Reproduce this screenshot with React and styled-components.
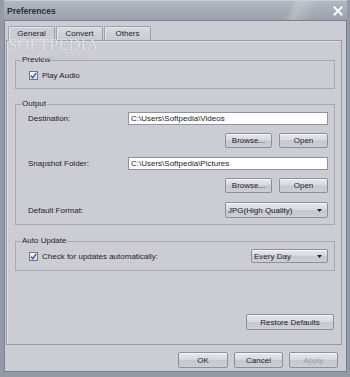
import styled, { createGlobalStyle } from "styled-components";

const GlobalStyle = createGlobalStyle`
  html, body {
    margin: 0;
    padding: 0;
    background: #cbccd4;
  }
  body {
    font-family: "Liberation Sans", Arial, sans-serif;
    font-size: 8px;
    color: #1e2228;
  }
  * { box-sizing: border-box; }
`;

const Window = styled.div`
  position: relative;
  width: 350px;
  height: 377px;
  display: flex;
  flex-direction: column;
  background: #cbccd4;
  border-left: 4px solid #959ba6;
  border-right: 3px solid #959ba6;
  border-bottom: 5px solid #959ba6;
  box-shadow: inset 1px 0 #7a808b, inset -1px 0 #7a808b, inset 0 -1px #7a808b;
  overflow: hidden;
`;

const TitleBar = styled.div`
  height: 21px;
  flex: none;
  display: flex;
  align-items: center;
  justify-content: space-between;
  padding: 0 4px 0 3px;
  border-top: 1px solid #c9cdd4;
  border-bottom: 1px solid #7d838e;
  background:
    linear-gradient(115deg, transparent 82%, rgba(255, 255, 255, 0.22) 84%, transparent 90%),
    linear-gradient(#b2b7c0, #9ba2ad);
  font-weight: bold;
  font-size: 8.5px;
  color: #2b3039;
`;

const CloseIcon = () => (
  <svg width="10" height="10" viewBox="0 0 10 10">
    <path d="M1.5 1.5 L8.5 8.5 M8.5 1.5 L1.5 8.5" stroke="#fff" strokeWidth="2" strokeLinecap="square" />
  </svg>
);

const Body = styled.div`
  flex: 1;
  display: flex;
  flex-direction: column;
  padding: 5px 5px 0 2px;
  min-height: 0;
`;

const TabStrip = styled.div`
  display: flex;
  align-items: flex-end;
  gap: 1px;
  margin-left: 2px;
  height: 14px;
  flex: none;
`;

const Tab = styled.div`
  width: 47px;
  height: ${(p) => (p.$active ? "15px" : "14px")};
  margin-bottom: ${(p) => (p.$active ? "-1px" : "0")};
  position: relative;
  z-index: ${(p) => (p.$active ? 1 : 0)};
  display: flex;
  align-items: center;
  justify-content: center;
  border: 1px solid #9aa0aa;
  border-bottom: none;
  border-radius: 2px 2px 0 0;
  background: ${(p) => (p.$active ? "#cbccd4" : "linear-gradient(#d9dae0, #c8c9d1)")};
  box-shadow: inset 1px 1px 0 #e6e7eb;
  padding-bottom: ${(p) => (p.$active ? "1px" : "0")};
`;

const Panel = styled.div`
  flex: 1;
  display: flex;
  flex-direction: column;
  border: 1px solid #959ba5;
  box-shadow: inset 1px 1px 0 #e1e2e7;
  padding: 14px 6px 14px 8px;
`;

const Group = styled.fieldset`
  margin: ${(p) => p.$mt || 0}px 0 0 0;
  padding: ${(p) => p.$pt}px 6px ${(p) => p.$pb}px 12px;
  border: 1px solid #a4a8b1;
  min-width: 0;
  display: flex;
  flex-direction: column;
`;

const Legend = styled.legend`
  padding: 0 1px;
  margin-left: -7px;
  line-height: 10px;
  font-size: 8px;
`;

const CheckRow = styled.div`
  display: flex;
  align-items: center;
  height: ${(p) => p.$h || 10}px;
  padding-left: 1px;
  gap: 4px;
`;

const Box = styled.span`
  width: 9px;
  height: 9px;
  flex: none;
  border: 1px solid #6f7682;
  background: linear-gradient(#f7f8fa, #d8dae0);
  display: flex;
  align-items: center;
  justify-content: center;
`;

const Checkbox = () => (
  <Box>
    <svg width="7" height="7" viewBox="0 0 7 7">
      <path d="M1 3.6 L2.8 5.6 L6.2 0.8" fill="none" stroke="#2f4fa3" strokeWidth="1.3" />
    </svg>
  </Box>
);

const Spacer = styled.div`
  flex: 1;
`;

const FieldRow = styled.div`
  display: flex;
  align-items: center;
  height: ${(p) => p.$h}px;
  margin-top: ${(p) => p.$mt || 0}px;
`;

const Label = styled.span`
  width: 100px;
  flex: none;
`;

const TextBox = styled.input`
  flex: 1;
  min-width: 0;
  height: 13px;
  margin: 0;
  padding: 0 2px;
  border: 1px solid #8e939c;
  background: #fff;
  font-family: "Liberation Sans", Arial, sans-serif;
  font-size: 8px;
  color: #1e2228;
  outline: none;
`;

const ButtonRow = styled.div`
  display: flex;
  justify-content: flex-end;
  gap: ${(p) => p.$gap || 7}px;
  margin-top: ${(p) => p.$mt || 0}px;
`;

const Button = styled.button`
  width: ${(p) => p.$w}px;
  height: ${(p) => p.$h || 15}px;
  margin: 0;
  padding: 0;
  border: 1px solid #8b909a;
  border-radius: 2px;
  background: linear-gradient(#e7e8ec 0%, #d7d8de 48%, #c6c8cf 52%, #cdced5 100%);
  box-shadow: inset 0 1px 0 #f5f6f8;
  font-family: "Liberation Sans", Arial, sans-serif;
  font-size: 8px;
  color: #1e2228;
  &:disabled {
    color: #9b9fa7;
  }
`;

const Select = styled.div`
  width: ${(p) => p.$w}px;
  height: ${(p) => p.$h}px;
  flex: none;
  display: flex;
  align-items: center;
  justify-content: space-between;
  padding: 0 5px 0 2px;
  border: 1px solid #8b909a;
  border-radius: 2px;
  background: linear-gradient(#e7e8ec 0%, #d7d8de 48%, #c6c8cf 52%, #cdced5 100%);
  box-shadow: inset 0 1px 0 #f5f6f8;
`;

const Arrow = () => (
  <svg width="5" height="3" viewBox="0 0 5 3">
    <path d="M0 0 H5 L2.5 3 Z" fill="#1e2228" />
  </svg>
);

const RestoreRow = styled.div`
  margin-top: auto;
  display: flex;
  justify-content: flex-end;
  padding-right: 1px;
`;

const Footer = styled.div`
  flex: none;
  display: flex;
  justify-content: flex-end;
  gap: 6px;
  padding: 7px 4px 4px 0;
`;

// softpedia watermark stamped over the dialog
const Watermark = styled.div`
  position: absolute;
  left: ${(p) => p.$x}px;
  top: ${(p) => p.$y}px;
  font-family: "Liberation Serif", "Times New Roman", serif;
  font-size: ${(p) => p.$size}px;
  line-height: 1;
  color: rgba(255, 255, 255, ${(p) => p.$alpha});
  text-shadow: 0 0 1px rgba(110, 115, 125, 0.5);
  letter-spacing: ${(p) => p.$ls || 0}px;
  pointer-events: none;
  z-index: 2;
`;

export default function App() {
  return (
    <>
      <GlobalStyle />
      <Window>
        <TitleBar>
          <span>Preferences</span>
          <CloseIcon />
        </TitleBar>
        <Body>
          <TabStrip>
            <Tab $active>General</Tab>
            <Tab>Convert</Tab>
            <Tab>Others</Tab>
          </TabStrip>
          <Panel>
            <Group $pt={5} $pb={8}>
              <Legend>Preview</Legend>
              <CheckRow>
                <Checkbox />
                <span>Play Audio</span>
              </CheckRow>
            </Group>

            <Group $mt={10} $pt={3} $pb={6}>
              <Legend>Output</Legend>
              <FieldRow $h={13}>
                <Label>Destination:</Label>
                <TextBox readOnly defaultValue="C:\Users\Softpedia\Videos" />
              </FieldRow>
              <ButtonRow $mt={8}>
                <Button $w={47}>Browse...</Button>
                <Button $w={49}>Open</Button>
              </ButtonRow>
              <FieldRow $h={13} $mt={9}>
                <Label>Snapshot Folder:</Label>
                <TextBox readOnly defaultValue="C:\Users\Softpedia\Pictures" />
              </FieldRow>
              <ButtonRow $mt={8}>
                <Button $w={47}>Browse...</Button>
                <Button $w={49}>Open</Button>
              </ButtonRow>
              <FieldRow $h={16} $mt={9}>
                <Label>Default Format:</Label>
                <Spacer />
                <Select $w={103} $h={16}>
                  <span>JPG(High Quality)</span>
                  <Arrow />
                </Select>
              </FieldRow>
            </Group>

            <Group $mt={11} $pt={3} $pb={7}>
              <Legend>Auto Update</Legend>
              <CheckRow $h={14}>
                <Checkbox />
                <span>Check for updates automatically:</span>
                <Spacer />
                <Select $w={77} $h={14}>
                  <span>Every Day</span>
                  <Arrow />
                </Select>
              </CheckRow>
            </Group>

            <RestoreRow>
              <Button $w={88} $h={16}>Restore Defaults</Button>
            </RestoreRow>
          </Panel>
          <Footer>
            <Button $w={50} $h={16}>OK</Button>
            <Button $w={49} $h={16}>Cancel</Button>
            <Button $w={49} $h={16} disabled>Apply</Button>
          </Footer>
        </Body>
        <Watermark $x={4} $y={37} $size={16} $alpha={0.7} $ls={0.5}>SOFTPEDIA</Watermark>
        <Watermark $x={37} $y={56} $size={5.5} $alpha={0.55}>www.softpedia.com</Watermark>
      </Window>
    </>
  );
}
